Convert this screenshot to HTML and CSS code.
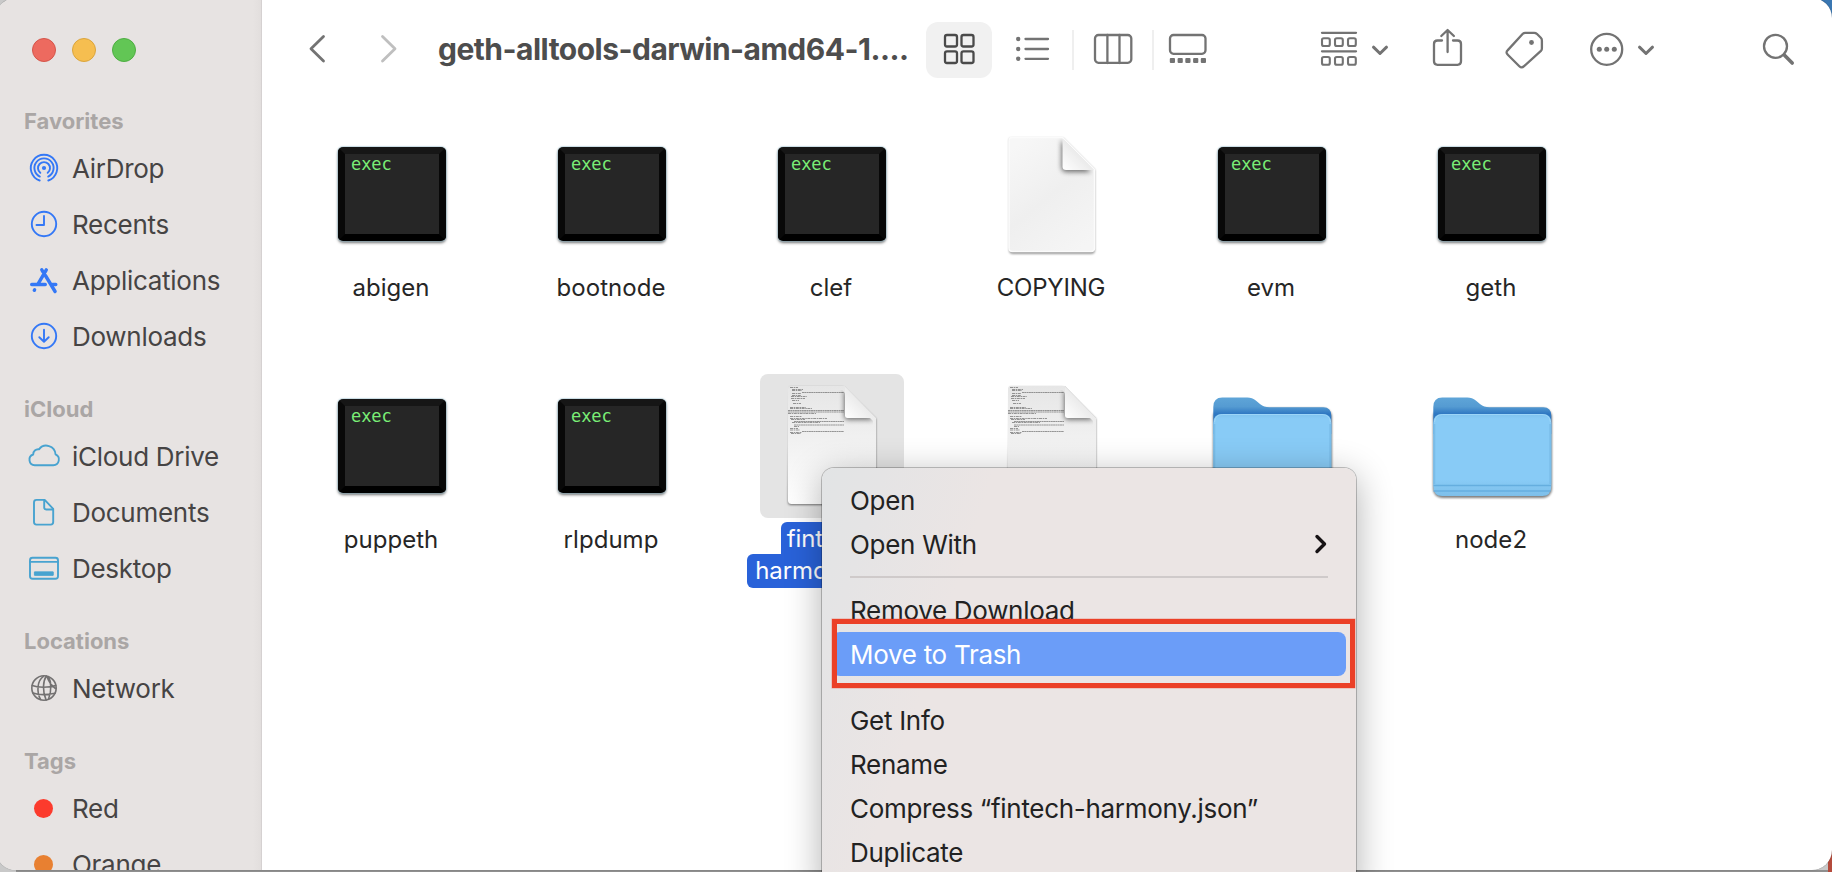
FILE: index.html
```html
<!DOCTYPE html>
<html lang="en">
<head>
<meta charset="utf-8">
<title>geth-alltools-darwin-amd64</title>
<link rel="stylesheet" href="styles.css">
</head>
<body>
<svg class="defs" aria-hidden="true">
  <defs>
    <linearGradient id="paper" x1="0.2" y1="0" x2="0.8" y2="1"><stop offset="0" stop-color="#f7f7f7"/><stop offset=".5" stop-color="#efefef"/><stop offset="1" stop-color="#f5f5f5"/></linearGradient>
    <linearGradient id="sheet" x1="0" y1="0" x2="0" y2="1"><stop offset="0" stop-color="#e6e6e6"/><stop offset=".35" stop-color="#eeeeee"/><stop offset="1" stop-color="#ffffff"/></linearGradient>
    <linearGradient id="curl" x1="0" y1="1" x2=".55" y2=".45"><stop offset="0" stop-color="#ffffff"/><stop offset="1" stop-color="#e9e9e9"/></linearGradient>
    <linearGradient id="tab" x1="0" y1="0" x2="0" y2="1"><stop offset="0" stop-color="#5fa5d8"/><stop offset=".25" stop-color="#559bd2"/><stop offset=".45" stop-color="#2f78c2"/></linearGradient>
    <linearGradient id="front" x1="0" y1="0" x2="0" y2="1"><stop offset="0" stop-color="#80c3ee"/><stop offset=".06" stop-color="#88cbf6"/><stop offset=".8" stop-color="#88cbf6"/><stop offset="1" stop-color="#7dbfea"/></linearGradient>
    <filter id="soft" x="-20%" y="-20%" width="140%" height="140%"><feGaussianBlur stdDeviation="1.3"/></filter>
    <filter id="softer" x="-60%" y="-60%" width="220%" height="220%"><feGaussianBlur stdDeviation="2.4"/></filter>
    <clipPath id="page-clip"><path d="M28 16h54l31 31v78q0 4-4 4H32q-4 0-4-4z"/></clipPath>

    <symbol id="copy-icon" viewBox="0 0 144 144">
      <path d="M31 16h52l32 32v80q0 4-4 4H33q-4 0-4-4V19q0-3 2-3z" fill="#000" opacity=".4" filter="url(#soft)"/>
      <path d="M32 15.500h50.500l32 32V126q0 3.500-3.500 3.500H32.500q-3.500 0-3.500-3.500V19q0-3.500 3-3.500z" fill="url(#paper)" stroke="#fbfbfb" stroke-width="1.500"/>
      <path d="M81.500 18v27q0 5 5 5H111z" fill="#000" opacity=".55" filter="url(#softer)" clip-path="url(#page-clip)"/>
      <path d="M82.500 16.500v28q0 3.500 3.500 3.500h28z" fill="url(#curl)"/>
    </symbol>

    <symbol id="json-icon" viewBox="0 0 144 144">
      <path d="M30 13h53l33 32v84q0 2-3 2H31q-3 0-3-3z" fill="#000" opacity=".5" filter="url(#soft)"/>
      <path d="M31 12h54l31 32v82.500q0 3.500-3.500 3.500H31.500q-3.500 0-3.500-3.500V15q0-3 3-3z" fill="url(#sheet)"/>
      <g fill="none" stroke="#666" stroke-width="1" opacity=".65">
        <path stroke-dasharray="3 .7 1.500 .6" d="M30 13.500h8M32 15.500h11M32 16.500h10M32 19.500h9M32 21.500h9M31 22.500h16M31 24.500h14M32 26.500h7M33 29.500h8M30 33.500h16M30 34.500h22M28 39.500h28M30 42.500h12M30 44.500h37M31 45.500h14M32 48.500h28M34 52.500h5M30 54.500h8M30 56h10M30 58.500h12M31 59.500h10"/>
        <path stroke-dasharray="2 .3" d="M42 18.500h42M28 36.500h56M28 38h56M34 47.500h50M34 51h50M42 57.500h42"/>
      </g>
      <path d="M84 15v26q0 5 5 5h25z" fill="#000" opacity=".5" filter="url(#softer)" clip-path="url(#page-clip)"/>
      <path d="M85 13v28.500q0 2.500 2.500 2.500H115z" fill="url(#curl)"/>
      <path d="M85 12l31 32" stroke="#dcdcdc" stroke-width=".8"/>
    </symbol>

    <symbol id="folder-icon" viewBox="0 0 144 144">
      <rect x="13" y="34" width="119" height="90" rx="9" fill="#000" opacity=".5" filter="url(#soft)"/>
      <path d="M13.300 50V33q0-9.500 9-9.500h25q5 0 8.500 3l4.500 3.700q3.500 3 9 3h54q8 0 8 8.500V60H13.300z" fill="url(#tab)"/>
      <path d="M13.300 112V49q0-9 9-9h100q9 0 9 9v63q0 10-9 10h-100q-9 0-9-10z" fill="url(#front)"/>
      <path d="M14.500 48q.8-7.500 8-7.500h99.500q7.500 0 8.500 7.500" fill="none" stroke="#a3d9fa" stroke-width="1" opacity=".8"/>
      <path d="M14.300 50v60M130.300 50v60" stroke="#74b8e4" stroke-width="2" opacity=".7"/>
      <path d="M13.500 111.500h117.500M13.500 117h117" stroke="#65aedf" stroke-width="1.300"/>
    </symbol>

    <symbol id="chevron" viewBox="0 22 24 56"><path d="M5.500 47.200l6.500 6.300 6.500-6.300" fill="none" stroke="#737373" stroke-width="3" stroke-linecap="round" stroke-linejoin="round"/></symbol>
  </defs>
</svg>

<div class="window">
  <aside class="sidebar">
    <div class="lights"><i class="light close"></i><i class="light minimize"></i><i class="light zoom"></i></div>

    <section class="group">
      <h2>Favorites</h2>
      <a class="item blue"><svg viewBox="0 0 32 32"><circle cx="16" cy="16" r="2.100" fill="currentColor" stroke="none"/><path d="M12.300 20.800a6 6 0 1 1 7.400 0M11.800 24.600a9.600 9.600 0 1 1 8.400 0M11.700 28.500a13.200 13.200 0 1 1 8.600 0"/></svg><span>AirDrop</span></a>
      <a class="item blue"><svg viewBox="0 0 32 32"><circle cx="16" cy="16" r="12.200"/><path d="M16 8v9H8.500"/></svg><span>Recents</span></a>
      <a class="item blue"><svg viewBox="0 0 32 32"><g stroke-width="3.400"><path d="M18.300 5.900L9.800 20.300"/><path d="M13.800 5.800l1.200 2"/><path d="M17.400 11.500l9.700 16"/><path d="M3.700 20.500h13.600M24.500 20.500h3.300"/><path d="M6.300 26.300l.3-.5"/></g></svg><span>Applications</span></a>
      <a class="item blue"><svg viewBox="0 0 32 32"><circle cx="16" cy="16" r="12.200"/><path d="M16 9.800v11.700M11.300 17.200l4.700 4.500 4.700-4.500"/></svg><span>Downloads</span></a>
    </section>
    <section class="group">
      <h2>iCloud</h2>
      <a class="item teal"><svg viewBox="0 0 32 32"><path d="M6.800 25.200h18.500a5.700 5.700 0 0 0 2.200-10.900A9.200 9.200 0 0 0 11 9.300a5 5 0 0 0-5.800 5.200A5.500 5.500 0 0 0 6.800 25.200z"/></svg><span>iCloud Drive</span></a>
      <a class="item teal"><svg viewBox="0 0 32 32"><path d="M8.500 3.900h8.200l8.500 9v13.200q0 2.500-2.500 2.500H8.500q-2.500 0-2.500-2.500V6.400q0-2.500 2.500-2.500z"/><path d="M16.200 4.500v7q0 2 2 2H25" /></svg><span>Documents</span></a>
      <a class="item teal"><svg viewBox="0 0 32 32"><rect x="2" y="5.800" width="28" height="21" rx="2.500"/><path d="M2 9.900h28"/><rect x="6.800" y="19.900" width="18.400" height="3.400" fill="currentColor" stroke-width="1"/></svg><span>Desktop</span></a>
    </section>
    <section class="group">
      <h2>Locations</h2>
      <a class="item gray"><svg viewBox="0 0 32 32"><g stroke-width="1.600"><circle cx="16" cy="16" r="12.200"/><path d="M18.300 4c-3.500 5.500-4 15-.2 24M15.500 4.300C9 8.500 8.500 20 12.500 27.500M20.300 4.700c3 4.500 3.500 14 .3 22M4.200 13.500c5.500 2.200 16 2.500 23.500 0M5 21c5.500 2 15 1.800 22 .200M19 4.500c1.500 5 4.500 9 8.500 12"/></g></svg><span>Network</span></a>
    </section>
    <section class="group">
      <h2>Tags</h2>
      <a class="item"><i class="tag red"></i><span>Red</span></a>
      <a class="item"><i class="tag orange"></i><span>Orange</span></a>
    </section>
  </aside>

  <main class="main">
    <header class="toolbar">
      <svg class="back" viewBox="305 22 24 56"><path d="M323.500 36.500L311 48.800l12.500 12.300" stroke-width="2.800"/></svg>
      <svg class="forward" viewBox="377 22 24 56"><path d="M382.500 36.500L395 48.800l-12.500 12.300" stroke-width="2.800"/></svg>
      <h1>geth-alltools-darwin-amd64-1....</h1>
      <div class="view-button"><svg viewBox="926 22 66 56"><rect x="945" y="35" width="12" height="11.500" rx="2"/><rect x="961.500" y="35" width="12" height="11.500" rx="2"/><rect x="945" y="51.300" width="12" height="11.700" rx="2"/><rect x="961.500" y="51.300" width="12" height="11.700" rx="2"/></svg></div>
      <svg class="list" viewBox="1012 22 41 56"><path d="M1025.500 39h22.500M1025.500 49h22.500M1025.500 58.800h22.500"/><g fill="#737373" stroke="none"><circle cx="1018.200" cy="39" r="2.200"/><circle cx="1018.200" cy="49" r="2.200"/><circle cx="1018.200" cy="58.800" r="2.200"/></g></svg>
      <i class="divider first"></i>
      <svg class="columns" viewBox="1090 22 46 56"><rect x="1095" y="35" width="36.300" height="27.800" rx="3.500"/><path d="M1107.400 35v28M1119.500 35v28"/></svg>
      <i class="divider"></i>
      <svg class="gallery" viewBox="1165 22 46 56"><rect x="1170" y="35" width="35.500" height="18.800" rx="3.500"/><g fill="#737373" stroke="none"><rect x="1169.800" y="58" width="5.200" height="5" rx="1"/><rect x="1177.600" y="58" width="5.200" height="5" rx="1"/><rect x="1185.300" y="58" width="5.200" height="5" rx="1"/><rect x="1193.100" y="58" width="5.200" height="5" rx="1"/><rect x="1200.800" y="58" width="5.200" height="5" rx="1"/></g></svg>
      <svg class="arrange" viewBox="1317 22 44 56"><path d="M1322 32.800h34M1322 51.300h34"/><g stroke-width="2.100"><rect x="1322" y="38.200" width="7.800" height="7.800" rx="1.800"/><rect x="1335" y="38.200" width="7.800" height="7.800" rx="1.800"/><rect x="1348" y="38.200" width="7.800" height="7.800" rx="1.800"/><rect x="1322" y="57" width="7.800" height="7.800" rx="1.800"/><rect x="1335" y="57" width="7.800" height="7.800" rx="1.800"/><rect x="1348" y="57" width="7.800" height="7.800" rx="1.800"/></g></svg>
      <svg class="chev"><use href="#chevron"/></svg>
      <svg class="share" viewBox="1429 22 38 56"><path d="M1442 40.500h-4.500q-3.500 0-3.500 3.500v17.300q0 3.500 3.500 3.500h20q3.500 0 3.500-3.500V44q0-3.500-3.500-3.500h-4.500M1447.600 52V30.500M1441.300 36l6.300-6 6.300 6"/></svg>
      <svg class="tags" viewBox="1502 22 45 56"><path d="M1525.200 32.800h9q1.500 0 2.600 1l4 4q1.100 1.100 1.100 2.600v8q0 1.500-1 2.500l-16.800 15.300q-2.500 2.300-4.800 0l-11.500-11.500q-2.500-2.300 0-4.600l15-16.300q1-1 2.400-1z"/><circle cx="1531.500" cy="42.500" r="2.400" fill="#737373" stroke="none"/></svg>
      <svg class="more" viewBox="1586 22 41 56"><circle cx="1606.700" cy="49.300" r="15.500"/><g fill="#737373" stroke="none"><circle cx="1599.300" cy="49.300" r="2.500"/><circle cx="1606.700" cy="49.300" r="2.500"/><circle cx="1614.300" cy="49.300" r="2.500"/></g></svg>
      <svg class="chev"><use href="#chevron"/></svg>
      <svg class="search" viewBox="1759 22 39 56"><circle cx="1775.500" cy="46.300" r="11.500"/><path d="M1784.500 55.300l7.700 7.700" stroke-width="3.600"/></svg>
    </header>

    <div class="files">
      <figure class="file"><div class="thumb"><div class="exec">exec</div></div><figcaption>abigen</figcaption></figure>
      <figure class="file"><div class="thumb"><div class="exec">exec</div></div><figcaption>bootnode</figcaption></figure>
      <figure class="file"><div class="thumb"><div class="exec">exec</div></div><figcaption>clef</figcaption></figure>
      <figure class="file"><div class="thumb"><svg class="art"><use href="#copy-icon"/></svg></div><figcaption class="caps">COPYING</figcaption></figure>
      <figure class="file"><div class="thumb"><div class="exec">exec</div></div><figcaption>evm</figcaption></figure>
      <figure class="file"><div class="thumb"><div class="exec">exec</div></div><figcaption>geth</figcaption></figure>
      <figure class="file"><div class="thumb"><div class="exec">exec</div></div><figcaption>puppeth</figcaption></figure>
      <figure class="file"><div class="thumb"><div class="exec">exec</div></div><figcaption>rlpdump</figcaption></figure>
      <figure class="file selected"><div class="thumb"><svg class="art"><use href="#json-icon"/></svg></div><figcaption><span class="line top">fintech-</span><span class="line">harmony.json</span></figcaption></figure>
      <figure class="file"><div class="thumb"><svg class="art"><use href="#json-icon"/></svg></div></figure>
      <figure class="file"><div class="thumb"><svg class="art"><use href="#folder-icon"/></svg></div></figure>
      <figure class="file"><div class="thumb"><svg class="art"><use href="#folder-icon"/></svg></div><figcaption>node2</figcaption></figure>
    </div>
  </main>
</div>

<nav class="menu">
  <div class="entry">Open</div>
  <div class="entry">Open With<svg class="arrow" viewBox="0 0 14 22"><path d="M3 3.500l7.500 7.500L3 18.500"/></svg></div>
  <div class="rule"></div>
  <div class="entry">Remove Download</div>
  <div class="entry active">Move to Trash</div>
  <div class="rule"></div>
  <div class="entry">Get Info</div>
  <div class="entry">Rename</div>
  <div class="entry">Compress “fintech-harmony.json”</div>
  <div class="entry">Duplicate</div>
  <div class="marker"></div>
</nav>
</body>
</html>
```
FILE: styles.css
```css
* { box-sizing: border-box; }

html, body { margin: 0; height: 872px; overflow: hidden; }

body {
  position: relative;
  font-family: "Inter", "Liberation Sans", sans-serif;
  background:
    linear-gradient(#3a77b2, #3a77b2) right top / 40px 60px no-repeat,
    linear-gradient(#b44b3c, #b44b3c) right bottom / 4px 30px no-repeat,
    linear-gradient(#8f8f8f, #8f8f8f) right 4px bottom 0 / 1812px 2px no-repeat,
    #c9c9c9;
}

.defs { position: absolute; width: 0; height: 0; }

.window {
  display: flex;
  width: 1836px;
  height: 872px;
  margin: -2px 0 0 -4px;
  border-radius: 20px;
  overflow: hidden;
  background: #fff;
  box-shadow: 0 0 1px rgba(0, 0, 0, .5);
}

/* Sidebar */
.sidebar {
  flex: none;
  width: 266px;
  padding-left: 4px;
  background: linear-gradient(90deg, #e7e3e2 257px, #e2dedd 265px);
  border-right: 1px solid #d5d1d1;
}

.lights { display: flex; gap: 16px; height: 104px; padding: 40px 0 0 32px; }
.light { width: 24px; height: 24px; border-radius: 50%; }
.close { background: #ed6a5f; border: 1px solid #d5554a; }
.minimize { background: #f6be50; border: 1px solid #dba53c; }
.zoom { background: #62c655; border: 1px solid #4eae42; }

.group { margin-bottom: 26px; }

.group h2 {
  margin: 0;
  padding-left: 24px;
  font-size: 22px;
  font-weight: 700;
  line-height: 38px;
  color: #aaa6a5;
}

.item {
  display: flex;
  align-items: center;
  height: 56px;
  padding-left: 28px;
  font-size: 26px;
  letter-spacing: -.28px;
  color: #464444;
}
.item svg {
  width: 32px;
  height: 32px;
  margin-right: 12px;
  overflow: visible;
  fill: none;
  stroke: currentColor;
  stroke-width: 1.9;
  stroke-linecap: round;
  stroke-linejoin: round;
}
.blue svg { color: #3478f6; }
.teal svg { color: #48a3d0; }
.gray svg { color: #737171; }

.tag { width: 19px; height: 19px; margin: 0 19px 0 6px; border-radius: 50%; }
.red { background: #fc3b2d; }
.orange { background: #e88031; }

/* Toolbar */
.main { flex: none; width: 1570px; }

.toolbar { display: flex; align-items: center; height: 102px; padding-top: 2px; }
.toolbar svg {
  flex: none;
  height: 56px;
  fill: none;
  stroke: #737373;
  stroke-width: 2.3;
  stroke-linecap: round;
  stroke-linejoin: round;
}
.toolbar .back { width: 24px; margin-left: 43px; }
.toolbar .forward { width: 24px; margin-left: 48px; stroke: #bfbfbf; }
.toolbar h1 {
  width: 480px;
  margin: 0 0 2px 37px;
  font-size: 30px;
  font-weight: 700;
  line-height: 40px;
  letter-spacing: -.51px;
  white-space: nowrap;
  color: #4d4d4d;
}
.view-button { width: 66px; height: 56px; margin-left: 8px; border-radius: 12px; background: #f1f1f1; }
.view-button svg { display: block; width: 66px; stroke: #4a4a4a; }
.toolbar .list { width: 41px; margin-left: 20px; }
.divider { width: 2px; height: 40px; margin-left: 16px; background: #efefef; }
.divider.first { margin-left: 19px; }
.toolbar .columns { width: 46px; margin-left: 16px; }
.toolbar .gallery { width: 46px; margin-left: 11px; }
.toolbar .arrange { width: 44px; margin-left: 106px; }
.toolbar .chev { width: 24px; margin-left: 7px; }
.toolbar .share { width: 38px; margin-left: 37px; }
.toolbar .tags { width: 45px; margin-left: 35px; }
.toolbar .more { width: 41px; margin-left: 39px; }
.toolbar .search { width: 39px; margin-left: 101px; }

/* Icon grid */
.files {
  display: grid;
  grid-template-columns: repeat(6, 220px);
  grid-auto-rows: 252px;
  padding: 22px 0 0 19px;
}
.file { display: flex; flex-direction: column; align-items: center; margin: 0; }
.thumb {
  display: flex;
  align-items: center;
  justify-content: center;
  width: 144px;
  height: 144px;
  margin-left: 2px;
  border-radius: 8px;
}
.art { width: 144px; height: 144px; }
.exec {
  width: 108px;
  height: 94px;
  margin-bottom: 1px;
  padding: 1px 0 0 6px;
  border: 7px solid;
  border-color: #161616 #080808 #000;
  border-radius: 5px;
  background: #262626;
  box-shadow: 0 0 1px 1px rgba(150, 190, 205, .5), 0 2px 3px rgba(0, 0, 0, .55);
  font: 17px/19px "DejaVu Sans Mono", monospace;
  letter-spacing: -.1px;
  color: #7aee76;
}
.file figcaption {
  display: flex;
  flex-direction: column;
  align-items: center;
  margin-top: 6px;
  font-size: 24px;
  line-height: 32px;
  letter-spacing: .05px;
  color: #262626;
}
.file .caps { letter-spacing: -.2px; }
.selected .thumb { background: #e4e4e4; }
.selected figcaption { margin-top: 4px; color: #fff; letter-spacing: -.1px; }
.line { height: 34px; padding: 1px 8px 0; border-radius: 6px; background: #2962d9; }
.line.top { height: 32px; padding: 1px 6px 0; border-radius: 6px 6px 0 0; }

/* Context menu */
.menu {
  position: absolute;
  left: 822px;
  top: 468px;
  width: 534px;
  height: 430px;
  padding: 10px;
  border-radius: 12px;
  background: linear-gradient(108deg, #e2e4e5 0, #e5e4e5 60px, #ebe5e4 165px);
  box-shadow: 0 0 0 1px rgba(0, 0, 0, .22), 0 8px 36px rgba(0, 0, 0, .32);
}
.entry {
  display: flex;
  align-items: center;
  justify-content: space-between;
  height: 44px;
  padding: 0 18px;
  border-radius: 8px;
  font-size: 26px;
  letter-spacing: -.3px;
  color: #222;
}
.entry.active { background: #6b9df8; color: #fff; }
.arrow { width: 14px; height: 22px; fill: none; stroke: #161214; stroke-width: 3.4; stroke-linecap: round; stroke-linejoin: round; }
.rule { height: 2px; margin: 10px 18px; background: #cfcaca; }
.marker {
  position: absolute;
  left: 10px;
  top: 151px;
  width: 523px;
  height: 69px;
  border: 5px solid #eb4027;
  box-shadow: 0 0 0 .5px rgba(235, 64, 39, .4);
}
```
